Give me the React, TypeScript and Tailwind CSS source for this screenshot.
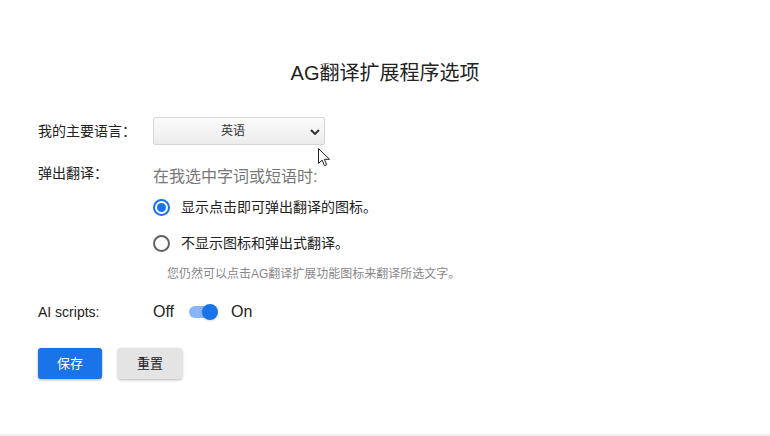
import React, { useState } from "react";

const font = { fontFamily: '"Liberation Sans", "Noto Sans CJK SC", sans-serif' };

/** Radio with a blue ring when checked */
const Radio: React.FC<{ checked: boolean; label: string; onClick: () => void }> = ({ checked, label, onClick }) => (
  <label className="flex items-center h-[20px] cursor-pointer" onClick={onClick}>
    <span
      className={`w-[17px] h-[17px] rounded-full border-2 flex items-center justify-center ${
        checked ? "border-[#1a73e8]" : "border-[#5f6368]"
      }`}
    >
      {checked && <span className="w-[9px] h-[9px] rounded-full bg-[#1a73e8]" />}
    </span>
    <span className="ml-[11px] text-[14px] text-[#222]">{label}</span>
  </label>
);

export default function App() {
  const [mode, setMode] = useState(0);
  const [on, setOn] = useState(true);

  return (
    <div className="relative w-[770px] h-[436px] bg-white overflow-hidden" style={font}>
      <div className="h-[434px] pl-[38px] pt-[61px]">
        <h1 className="text-[20px] text-[#222] text-center leading-[24px] pr-[38px]">AG翻译扩展程序选项</h1>

        {/* main language */}
        <div className="flex items-center mt-[32px]">
          <div className="w-[115px] text-[14px] text-[#222]">我的主要语言：</div>
          <div className="relative w-[172px] h-[28px] border border-[#d6d6d6] rounded-[2px] bg-gradient-to-b from-[#fbfbfb] to-[#ececec] flex items-center justify-center">
            <span className="text-[12px] text-[#333] -ml-[12px]">英语</span>
            <svg viewBox="0 0 10 6" className="absolute right-[4px] top-[11px] w-[10px] h-[6px]">
              <path d="M1 1l4 4 4-4" fill="none" stroke="#333" strokeWidth="2" />
            </svg>
          </div>
        </div>

        {/* popup */}
        <div className="flex mt-[17px]">
          <div className="w-[115px] text-[14px] text-[#222] pt-[1px]">弹出翻译：</div>
          <div className="pt-[5px]">
            <div className="text-[16px] text-[#777] leading-[20px]">在我选中字词或短语时:</div>
            <div className="mt-[10px]">
              <Radio checked={mode === 0} label="显示点击即可弹出翻译的图标。" onClick={() => setMode(0)} />
            </div>
            <div className="mt-[16px]">
              <Radio checked={mode === 1} label="不显示图标和弹出式翻译。" onClick={() => setMode(1)} />
            </div>
            <div className="mt-[12px] ml-[14px] text-[12px] text-[#888]">您仍然可以点击AG翻译扩展功能图标来翻译所选文字。</div>
          </div>
        </div>

        {/* AI scripts */}
        <div className="flex items-center mt-[17px] h-[24px]">
          <div className="w-[115px] text-[14px] text-[#222]">AI scripts:</div>
          <span className="text-[16px] text-[#222]">Off</span>
          <button
            onClick={() => setOn(!on)}
            className="relative ml-[15px] w-[30px] h-[20px] flex items-center"
          >
            <span className={`w-[28px] h-[12px] rounded-full ${on ? "bg-[#8ab4f8]" : "bg-[#bdc1c6]"}`} />
            <span
              className={`absolute top-[2px] w-[16px] h-[16px] rounded-full shadow ${
                on ? "left-[13px] bg-[#1a73e8]" : "left-[-2px] bg-white"
              }`}
            />
          </button>
          <span className="ml-[12px] text-[16px] text-[#222]">On</span>
        </div>

        {/* buttons */}
        <div className="flex gap-[16px] mt-[24px]">
          <button className="w-[64px] h-[31px] rounded-[3px] bg-[#1a73e8] text-white text-[13px] shadow-[0_1px_3px_rgba(0,0,0,0.3)]">
            保存
          </button>
          <button className="w-[64px] h-[31px] rounded-[3px] bg-[#e4e4e4] text-[#222] text-[13px] shadow-[0_1px_3px_rgba(0,0,0,0.3)]">
            重置
          </button>
        </div>
      </div>
      <div className="h-[2px] bg-[#efefef]" />

      {/* mouse pointer */}
      <svg viewBox="0 0 12 19" className="absolute left-[318px] top-[148px] w-[12px] h-[19px]">
        <path d="M0.5 0.5v15l3.6-3.4 2.4 5.6 2.2-1-2.4-5.4h5.2z" fill="white" stroke="#222" strokeWidth="1" strokeLinejoin="round" />
      </svg>
    </div>
  );
}
